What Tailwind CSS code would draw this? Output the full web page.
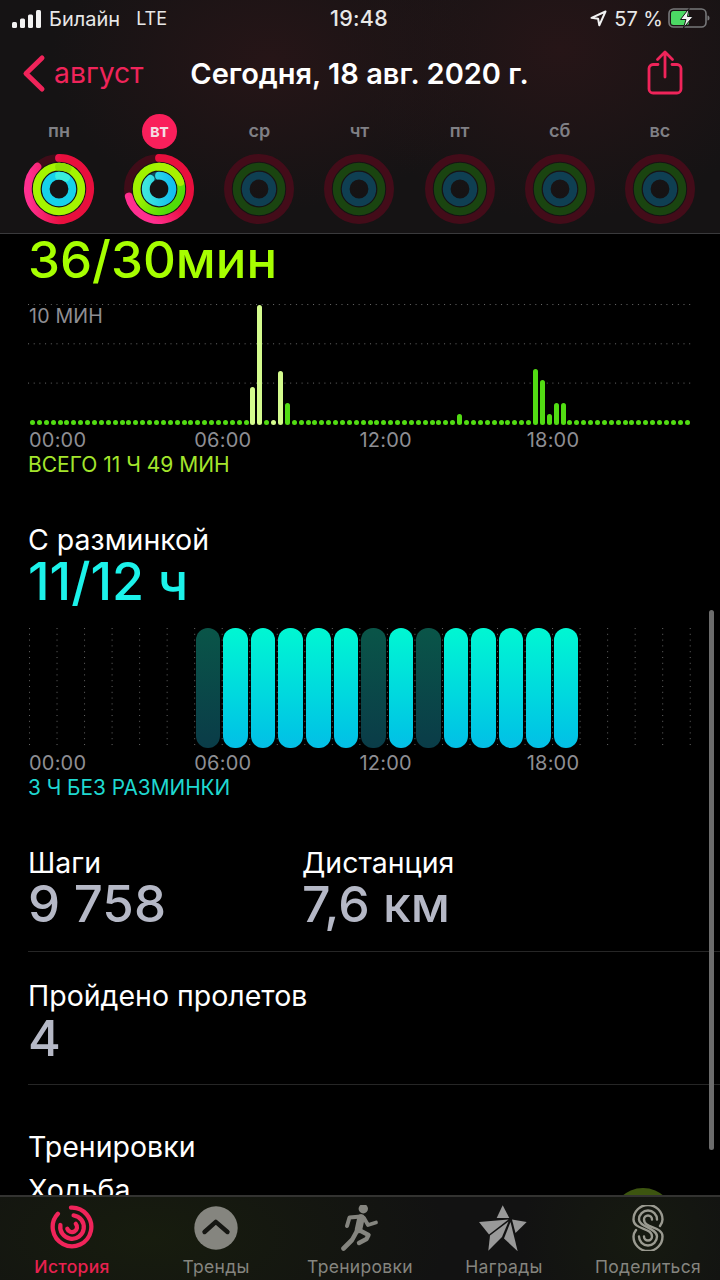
<!DOCTYPE html>
<html lang="ru">
<head>
<meta charset="utf-8">
<script src="https://cdn.jsdelivr.net/npm/@tailwindcss/browser@4"></script>
</head>
<body class="bg-black">
<div class="relative w-[720px] h-[1280px] overflow-hidden bg-black text-white font-['Inter','Noto_Sans',sans-serif] flex flex-col">

  <!-- Header -->
  <header class="shrink-0 h-[234px] border-b border-[#3a3a3c] bg-[#151314] bg-[radial-gradient(ellipse_220px_150px_at_270px_60px,#261517,transparent),radial-gradient(ellipse_220px_170px_at_560px_50px,#261517,transparent)] flex flex-col">
    <div class="h-[37px] pl-[12px] pr-[10px] flex items-center justify-between text-[20px] leading-none text-[#e8e8e8]">
      <div class="flex items-center w-[250px]">
        <svg width="30" height="18" viewBox="0 0 30 18" class="mr-[7px]"><g fill="#f2f2f2"><rect x="0" y="12" width="5" height="6" rx="1.5"/><rect x="8" y="8.5" width="5" height="9.5" rx="1.5"/><rect x="16" y="4.5" width="5" height="13.5" rx="1.5"/><rect x="24" y="0" width="5" height="18" rx="1.5"/></g></svg>
        <span>Билайн</span>
        <span class="ml-[16px] text-[18px]">LTE</span>
      </div>
      <div class="font-medium text-[21.5px] tracking-[0.3px] -ml-[4px]">19:48</div>
      <div class="flex items-center justify-end w-[250px]">
        <svg width="17" height="17" viewBox="0 0 17 17" class="mr-[7px]"><path d="M15.5 1.5 1.5 7.8l6.6.9 1.2 6.6z" fill="none" stroke="#f2f2f2" stroke-width="2" stroke-linejoin="round"/></svg>
        <span class="text-[20px]">57 %</span>
        <svg width="42" height="21" viewBox="0 0 42 21" class="ml-[5px]">
          <rect x="1" y="1" width="37" height="18" rx="4.5" fill="none" stroke="#77787a" stroke-width="1.6"/>
          <rect x="3" y="3" width="18" height="14" rx="2.5" fill="#4cd964"/>
          <path d="M39.5 7.5c1.5.3 2 1.3 2 2.6s-.5 2.2-2 2.5z" fill="#77787a"/>
          <path d="M21 0.5 12.5 11.5h5.5L15.5 20 25 8.5h-5.5z" fill="#f4f4f4" stroke="#151314" stroke-width="1"/>
        </svg>
      </div>
    </div>

    <div class="relative h-[74px] flex items-center justify-center">
      <div class="absolute left-[22px] top-[17px] flex items-center text-[#f0245a]">
        <svg width="24" height="40" viewBox="0 0 24 40"><path d="M20 4 4 19.5 20 35" fill="none" stroke="#f0245a" stroke-width="5" stroke-linecap="round" stroke-linejoin="round"/></svg>
        <span class="ml-[8px] text-[28.3px] leading-none -mt-[1px]">август</span>
      </div>
      <h1 class="text-[29px] font-semibold leading-none -mt-[1px] ml-[-1px]">Сегодня, 18 авг. 2020 г.</h1>
      <svg class="absolute left-[647px] top-[13px]" width="36" height="45" viewBox="0 0 36 45" fill="none" stroke="#f0245a" stroke-width="2.8" stroke-linecap="round" stroke-linejoin="round">
        <path d="M11 14.5H6a4 4 0 0 0-4 4V39a4 4 0 0 0 4 4h24a4 4 0 0 0 4-4V18.5a4 4 0 0 0-4-4h-5"/>
        <path d="M18 27V2.5M10.5 9.5 18 2l7.5 7.5"/>
      </svg>
    </div>

    <div class="grid grid-cols-7 ml-[9px] w-[701px] text-center mt-[3px]">
      <div class="flex flex-col items-center">
        <div class="h-[34px] flex items-center text-[18px] font-semibold text-[#808085] leading-none">пн</div>
        <svg width="72" height="72" viewBox="-36 -36 72 72" class="mt-[5px]">
          <defs>
            <linearGradient id="rm" gradientUnits="userSpaceOnUse" x1="30" y1="0" x2="-30" y2="0"><stop offset="0.45" stop-color="#e80f3d"/><stop offset="1" stop-color="#ff2f90"/></linearGradient>
            <linearGradient id="rt" gradientUnits="userSpaceOnUse" x1="24" y1="-24" x2="-24" y2="24"><stop offset="0.45" stop-color="#e80f3d"/><stop offset="0.9" stop-color="#ff2f90"/></linearGradient>
            <linearGradient id="gt" gradientUnits="userSpaceOnUse" x1="18" y1="16" x2="-12" y2="-8"><stop offset="0.1" stop-color="#50dc08"/><stop offset="0.9" stop-color="#a0f200"/></linearGradient>
            <linearGradient id="bt" gradientUnits="userSpaceOnUse" x1="13" y1="0" x2="-13" y2="0"><stop offset="0" stop-color="#14bff0"/><stop offset="1" stop-color="#3de6dc"/></linearGradient>
          </defs>
          <circle r="31.1" fill="none" stroke="#3f0c18" stroke-width="7.8"/>
          <circle r="22.3" fill="none" stroke="#a4f500" stroke-width="7.8"/>
          <circle r="13.3" fill="none" stroke="#16d2ea" stroke-width="7.8"/>
          <path d="M0-31.1A31.1 31.1 0 1 1 -21.6 -22.4" fill="none" stroke="url(#rm)" stroke-width="7.8" stroke-linecap="round"/>
          <path d="M0-22.3A22.3 22.3 0 0 1 8.7 -20.5" fill="none" stroke="#8ee000" stroke-width="7.8" stroke-linecap="round"/>
          <path d="M0-13.3A13.3 13.3 0 0 1 7 -11.3" fill="none" stroke="#3aeedd" stroke-width="7.8" stroke-linecap="round"/>
        </svg>
      </div>
      <div class="flex flex-col items-center">
        <div class="h-[34px] flex items-center"><span class="w-[35px] h-[35px] rounded-full bg-[#fa1f5b] text-[17px] font-bold leading-[35px] text-[#f4dce2]">вт</span></div>
        <svg width="72" height="72" viewBox="-36 -36 72 72" class="mt-[5px]">
          <circle r="31.1" fill="none" stroke="#3f0c18" stroke-width="7.8"/>
          <circle r="22.3" fill="none" stroke="url(#gt)" stroke-width="7.8"/>
          <circle r="13.3" fill="none" stroke="#0f4a5a" stroke-width="7.8"/>
          <path d="M0-31.1A31.1 31.1 0 1 1 -30.2 7.5" fill="none" stroke="url(#rt)" stroke-width="7.8" stroke-linecap="round"/>
          <path d="M0-22.3A22.3 22.3 0 0 1 21.2 -6.9" fill="none" stroke="#a8f000" stroke-width="7.8" stroke-linecap="round"/>
          <path d="M0-13.3A13.3 13.3 0 1 1 -8.5 -10.2" fill="none" stroke="url(#bt)" stroke-width="7.8" stroke-linecap="round"/>
        </svg>
      </div>
      <div class="flex flex-col items-center">
        <div class="h-[34px] flex items-center text-[18px] font-semibold text-[#808085] leading-none">ср</div>
        <svg width="72" height="72" viewBox="-36 -36 72 72" class="mt-[5px]"><circle r="31.1" fill="none" stroke="#430c19" stroke-width="7.8"/><circle r="22.3" fill="none" stroke="#1a4410" stroke-width="7.8"/><circle r="13.3" fill="none" stroke="#0f3f52" stroke-width="7.8"/></svg>
      </div>
      <div class="flex flex-col items-center">
        <div class="h-[34px] flex items-center text-[18px] font-semibold text-[#808085] leading-none">чт</div>
        <svg width="72" height="72" viewBox="-36 -36 72 72" class="mt-[5px]"><circle r="31.1" fill="none" stroke="#430c19" stroke-width="7.8"/><circle r="22.3" fill="none" stroke="#1a4410" stroke-width="7.8"/><circle r="13.3" fill="none" stroke="#0f3f52" stroke-width="7.8"/></svg>
      </div>
      <div class="flex flex-col items-center">
        <div class="h-[34px] flex items-center text-[18px] font-semibold text-[#808085] leading-none">пт</div>
        <svg width="72" height="72" viewBox="-36 -36 72 72" class="mt-[5px]"><circle r="31.1" fill="none" stroke="#430c19" stroke-width="7.8"/><circle r="22.3" fill="none" stroke="#1a4410" stroke-width="7.8"/><circle r="13.3" fill="none" stroke="#0f3f52" stroke-width="7.8"/></svg>
      </div>
      <div class="flex flex-col items-center">
        <div class="h-[34px] flex items-center text-[18px] font-semibold text-[#808085] leading-none">сб</div>
        <svg width="72" height="72" viewBox="-36 -36 72 72" class="mt-[5px]"><circle r="31.1" fill="none" stroke="#430c19" stroke-width="7.8"/><circle r="22.3" fill="none" stroke="#1a4410" stroke-width="7.8"/><circle r="13.3" fill="none" stroke="#0f3f52" stroke-width="7.8"/></svg>
      </div>
      <div class="flex flex-col items-center">
        <div class="h-[34px] flex items-center text-[18px] font-semibold text-[#808085] leading-none">вс</div>
        <svg width="72" height="72" viewBox="-36 -36 72 72" class="mt-[5px]"><circle r="31.1" fill="none" stroke="#430c19" stroke-width="7.8"/><circle r="22.3" fill="none" stroke="#1a4410" stroke-width="7.8"/><circle r="13.3" fill="none" stroke="#0f3f52" stroke-width="7.8"/></svg>
      </div>
    </div>
  </header>

  <!-- Scroll content -->
  <main class="relative flex-1 min-h-0 overflow-hidden pl-[28px]">
    <div class="text-[51px] leading-[52px] font-medium text-[#a6ff00]">36/30мин</div>

    <div class="relative mt-[18px] w-[663px] h-[121px]">
      <svg class="absolute inset-x-0 top-0" width="664" height="82"><defs><pattern id="hd" width="5.7" height="39.3" patternUnits="userSpaceOnUse"><rect width="1" height="1" fill="#6a6a6a"/></pattern></defs><rect width="664" height="82" fill="url(#hd)"/></svg>
      <div class="absolute left-[1px] top-[1px] text-[19.6px] leading-[22px] text-[#8e8e93] tracking-[0.2px]">10 МИН</div>
      <div id="moves" class="absolute left-[1px] right-0 bottom-0 h-[121px] flex items-end"></div>
    </div>
    <div class="ml-[1px] w-[661px] h-[25px] mt-[3px] text-[20px] leading-[25px] text-[#8e8e93] grid grid-cols-4 tracking-[0.2px]">
      <span>00:00</span><span>06:00</span><span>12:00</span><span class="ml-[2px]">18:00</span>
    </div>
    <div class="text-[21px] leading-[23px] text-[#a4e52c]">ВСЕГО 11 Ч 49 МИН</div>

    <div class="text-[28.5px] leading-[34px] mt-[47px]">С разминкой</div>
    <div class="text-[52px] leading-[50px] font-medium text-[#1cf2ea]">11/12 ч</div>

    <div class="relative ml-[1px] mt-[21px] w-[662px] h-[120px]">
      <svg class="absolute inset-0" width="662" height="118"><defs><pattern id="vd" width="27.53" height="5.8" patternUnits="userSpaceOnUse"><rect width="1" height="1" fill="#666666"/></pattern></defs><rect width="662" height="118" fill="url(#vd)"/></svg>
      <div id="stand" class="absolute inset-0 flex w-[661px]"></div>
    </div>
    <div class="ml-[1px] w-[661px] h-[25px] mt-[3px] text-[20px] leading-[25px] text-[#8e8e93] grid grid-cols-4 tracking-[0.2px]">
      <span>00:00</span><span>06:00</span><span>12:00</span><span class="ml-[2px]">18:00</span>
    </div>
    <div class="text-[20.8px] leading-[23px] text-[#1fd8d0]">3 Ч БЕЗ РАЗМИНКИ</div>

    <div class="flex mt-[47px] h-[106px] border-b border-[#262626]">
      <div class="w-[274px]">
        <div class="text-[28.5px] leading-[34px]">Шаги</div>
        <div class="text-[51px] leading-[50px] font-medium text-[#b5b8c6] -mt-[1px]">9 758</div>
      </div>
      <div>
        <div class="text-[28.5px] leading-[34px]">Дистанция</div>
        <div class="text-[50px] leading-[50px] font-medium text-[#b5b8c6] -mt-[1px]">7,6 км</div>
      </div>
    </div>
    <div class="h-[133px] pt-[27px] border-b border-[#262626]">
      <div class="text-[28.5px] leading-[34px]">Пройдено пролетов</div>
      <div class="text-[50px] leading-[50px] font-medium text-[#b5b8c6]">4</div>
    </div>
    <div class="text-[28.5px] leading-[34px] mt-[45px]">Тренировки</div>
    <div class="text-[28.5px] leading-[34px] mt-[9px]">Ходьба</div>

    <div class="absolute right-[45px] top-[954px] w-[64px] h-[64px] rounded-full bg-[#3d5510]"></div>
    <div class="absolute left-[709px] top-[376px] w-[5px] h-[540px] rounded-full bg-[#6c6c6c]"></div>
  </main>

  <!-- Tab bar -->
  <nav class="absolute left-0 right-0 bottom-0 h-[85px] border-t-2 border-[#333331] bg-[#121212] bg-[radial-gradient(ellipse_300px_130px_at_150px_40px,#171c0e,transparent),radial-gradient(ellipse_120px_110px_at_640px_40px,#161a10,transparent)] grid grid-cols-5 text-center text-[17.5px] leading-none text-[#85857f] tracking-[0.3px]">
    <div class="flex flex-col items-center text-[#e8214f] font-medium">
      <svg width="46" height="46" viewBox="-23 -22 46 46" class="mt-[8px]" fill="none" stroke="#f0245a" stroke-width="4.3" stroke-linecap="round">
        <path d="M-1-19.3A19.3 19.3 0 1 1 -14.1 -13.2"/>
        <path d="M1.6-11.7A11.8 11.8 0 1 1 -11.6 -2"/>
        <path d="M3.8-3.2A5 5 0 1 1 -4.7 1.7"/>
      </svg>
      <span class="mt-[7px]">История</span>
    </div>
    <div class="flex flex-col items-center">
      <svg width="46" height="46" viewBox="-23 -23 46 46" class="mt-[8px]"><circle r="21.7" fill="#85857f"/><path d="M-11.5 4-.2-6.2 11.5 4" fill="none" stroke="#151612" stroke-width="4.4" stroke-linecap="round" stroke-linejoin="round"/></svg>
      <span class="mt-[7px]">Тренды</span>
    </div>
    <div class="flex flex-col items-center">
      <svg width="46" height="46" viewBox="7 7 46 46" class="mt-[8px]" fill="none" stroke="#85857f" stroke-linecap="round" stroke-linejoin="round">
        <circle cx="33.3" cy="10.7" r="4.7" fill="#85857f" stroke="none"/>
        <path d="M31 18.5 19.5 19.5 17 28" stroke-width="4"/>
        <path d="M31 20 28.5 31.5" stroke-width="7.5"/>
        <path d="M34 20 38 27 46 24.5" stroke-width="3.8"/>
        <path d="M27 33 22 42 13.5 50.5" stroke-width="4.6"/>
        <path d="M29 32 38.5 37 36.5 41 29 45" stroke-width="4.4"/>
      </svg>
      <span class="mt-[7px]">Тренировки</span>
    </div>
    <div class="flex flex-col items-center">
      <svg width="50" height="46" viewBox="9 7 50 46" class="mt-[8px]" fill="#999999">
        <path d="M32.7 7.3 39.3 20H26.7Z"/>
        <path d="M9 24 38.5 21.5 19 36.5Z"/>
        <path d="M20 37.5 38.5 23.5 32 39 18.3 52.7Z"/>
        <path d="M40.5 24 34 40.5 47.7 53.3Z"/>
        <path d="M42 21.5 56.7 24 45.5 35Z"/>
      </svg>
      <span class="mt-[7px]">Награды</span>
    </div>
    <div class="flex flex-col items-center">
      <svg width="34" height="46" viewBox="0 0 34 46" class="mt-[8px]" fill="none" stroke="#9a9a90" stroke-width="2.4" stroke-linecap="round">
        <path d="M29 21C30.5 19 31.5 17 31.5 14.5A14.5 14.5 0 0 0 2.5 14.5C2.5 25 21 22 21 31.5A4 4 0 0 1 13 31.5"/>
        <path d="M26 14.5A9 9 0 0 0 8 14.5C8 22 26 23 26 31.5A9 9 0 0 1 8 31.5"/>
        <path d="M21 14.5A4 4 0 0 0 13 14.5C13 24 31.5 21 31.5 31.5A14.5 14.5 0 0 1 2.5 31.5C2.5 29 3.5 27 5 25"/>
      </svg>
      <span class="mt-[7px]">Поделиться</span>
    </div>
  </nav>
</div>

<script>
  // slot index in 15-minute steps: bar height in px, pale = goal-hour colour
  var tall = {32:{h:38,p:1},33:{h:120,p:1},35:{h:5,p:1},36:{h:54,p:1},37:{h:22},62:{h:11},73:{h:56},74:{h:45},75:{h:11},76:{h:22},77:{h:22}};
  var moves = document.getElementById('moves');
  for (var i = 0; i < 96; i++) {
    var b = tall[i] || {h:5};
    var d = document.createElement('div');
    d.className = 'flex-1 flex justify-center';
    var s = document.createElement('div');
    s.className = b.p ? 'w-[5px] rounded-full bg-[#d4fb8e]' : 'w-[5px] rounded-full bg-[#52dc13]';
    s.style.height = b.h + 'px';
    d.appendChild(s);
    moves.appendChild(d);
  }
  var dim = {6:1,12:1,14:1};
  var stand = document.getElementById('stand');
  for (var j = 0; j < 24; j++) {
    var c = document.createElement('div');
    c.className = 'flex-1 px-[1.5px]';
    if (j >= 6 && j <= 19) {
      var p = document.createElement('div');
      p.className = dim[j]
        ? 'h-full rounded-[12px] bg-gradient-to-b from-[#0a5548] to-[#0a3c48]'
        : 'h-full rounded-[12px] bg-gradient-to-b from-[#00f7d2] to-[#04bfe6]';
      c.appendChild(p);
    }
    stand.appendChild(c);
  }
</script>
</body>
</html>
